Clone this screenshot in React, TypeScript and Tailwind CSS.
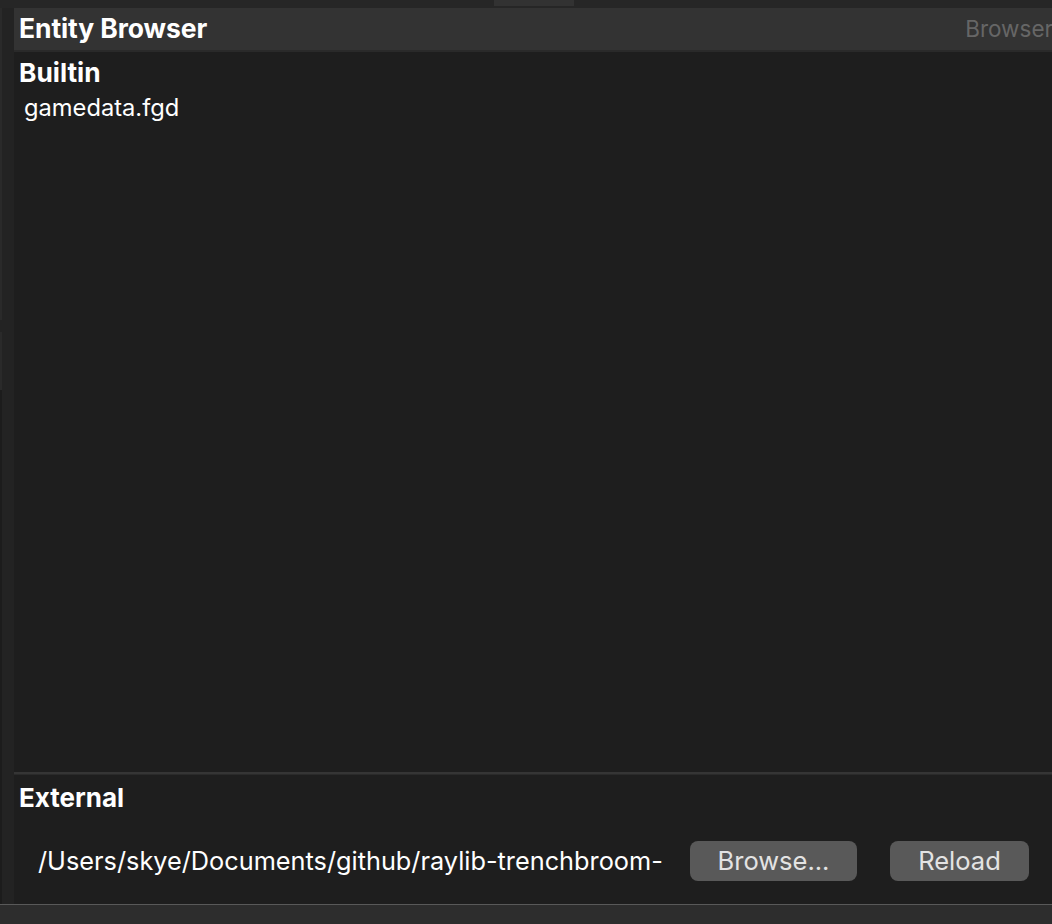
export default function App() {
  const font = { fontFamily: 'Inter, "Noto Sans", sans-serif' };
  return (
    <div className="w-[1052px] h-[924px] flex flex-col bg-[#1e1e1e] overflow-hidden" style={font}>
      <div className="h-[8px] shrink-0 bg-[#262626] flex">
        <div className="ml-[494px] w-[80px] h-[6px] bg-[#323232]" />
      </div>
      <div className="flex flex-1 min-h-0">
        <div className="w-[14px] shrink-0 flex bg-[#232323]">
          <div className="w-[2px] flex flex-col">
            <div className="h-[312px] bg-[#2a2a2a]" />
            <div className="h-[12px]" />
            <div className="h-[58px] bg-[#2a2a2a]" />
            <div className="flex-1 bg-[#1c1c1c]" />
          </div>
        </div>
        <div className="flex-1 flex flex-col min-w-0">
          <div className="h-[42px] shrink-0 bg-[#333333] flex items-center justify-between pl-[5px] overflow-hidden">
            <span className="text-white font-bold text-[26.5px] tracking-[-0.1px]">Entity Browser</span>
            <span className="text-[#666666] text-[22.5px] mr-[-1px]">Browser</span>
          </div>
          <div className="h-[2px] shrink-0 bg-[#2a2a2a]" />
          <div className="flex-1 flex flex-col pl-[5px] pt-[6px]">
            <div className="text-white font-bold text-[26.3px] leading-[30px]">Builtin</div>
            <div className="text-white text-[23.7px] leading-[28px] pl-[5px] mt-[6px]">gamedata.fgd</div>
          </div>
          <div className="h-[2px] shrink-0 bg-[#353535]" />
          <div className="h-[1px] shrink-0 bg-[#2a2a2a]" />
          <div className="h-[129px] shrink-0 flex flex-col pl-[5px]">
            <div className="text-white font-bold text-[26px] leading-[30px] mt-[8px]">External</div>
            <div className="flex items-center mt-[28px]">
              <span className="text-white text-[25.3px] ml-[19px] w-[640px] whitespace-nowrap overflow-hidden">/Users/skye/Documents/github/raylib-trenchbroom-</span>
              <button className="w-[167px] h-[40px] ml-[12px] rounded-[8px] bg-[#595959] text-[#e3e3e3] text-[25.5px]">Browse...</button>
              <button className="w-[139px] h-[40px] ml-[33px] rounded-[8px] bg-[#595959] text-[#e3e3e3] text-[25.5px]">Reload</button>
            </div>
          </div>
        </div>
      </div>
      <div className="h-[1px] shrink-0 bg-[#595959]" />
      <div className="h-[19px] shrink-0 bg-[#2d2d2d]" />
    </div>
  );
}
